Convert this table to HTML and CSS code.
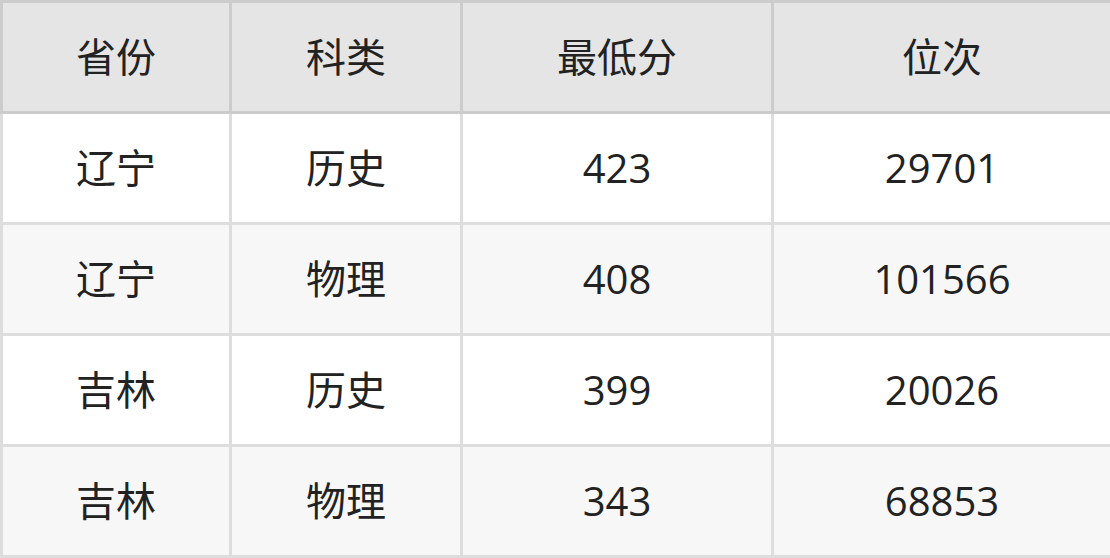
FILE: index.html
```html
<!DOCTYPE html>
<html lang="zh">
<head>
<meta charset="utf-8">
<link rel="stylesheet" href="styles.css">
</head>
<body>
<table class="score-table">
  <colgroup>
    <col class="c1"><col class="c2"><col class="c3"><col class="c4">
  </colgroup>
  <thead>
    <tr><th>省份</th><th>科类</th><th>最低分</th><th>位次</th></tr>
  </thead>
  <tbody>
    <tr><td>辽宁</td><td>历史</td><td>423</td><td>29701</td></tr>
    <tr><td>辽宁</td><td>物理</td><td>408</td><td>101566</td></tr>
    <tr><td>吉林</td><td>历史</td><td>399</td><td>20026</td></tr>
    <tr><td>吉林</td><td>物理</td><td>343</td><td>68853</td></tr>
  </tbody>
</table>
</body>
</html>
```
FILE: styles.css
```css
html, body {
  margin: 0;
  padding: 0;
  background: #ffffff;
}
.score-table {
  border-collapse: collapse;
  width: 1110px;
  table-layout: fixed;
  font-family: "Open Sans", "Noto Sans CJK SC", sans-serif;
  font-size: 40px;
  color: #222222;
}
.c1 { width: 229px; }
.c2 { width: 231px; }
.c3 { width: 311px; }
.c4 { width: 339px; }
.score-table th,
.score-table td {
  border: 3px solid #dddddd;
  height: 108px;
  padding: 0;
  text-align: center;
  vertical-align: middle;
  font-weight: normal;
  line-height: 1;
}
.score-table th {
  background: #e5e5e5;
  border-color: #cccccc;
}
.score-table tbody tr:nth-child(odd) td { background: #ffffff; }
.score-table tbody tr:nth-child(even) td { background: #f7f7f7; }
```
